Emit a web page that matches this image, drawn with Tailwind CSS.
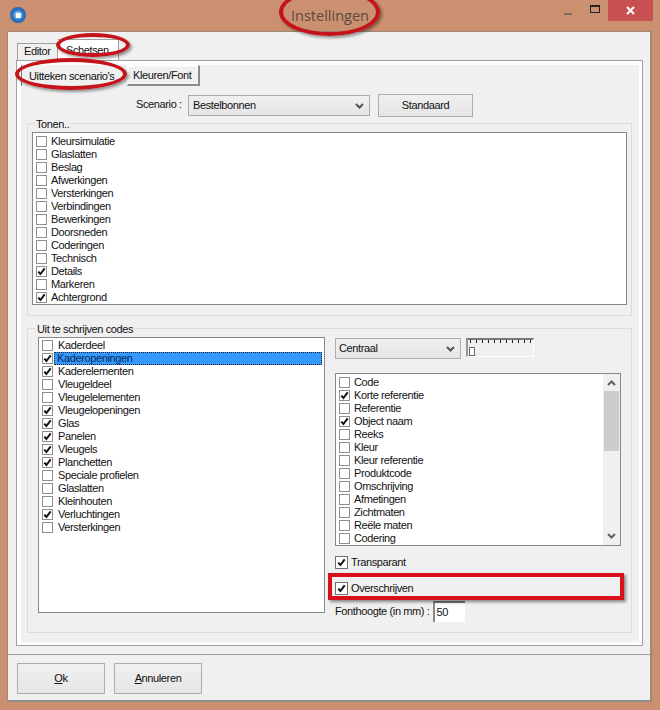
<!DOCTYPE html>
<html>
<head>
<meta charset="utf-8">
<script src="https://cdn.jsdelivr.net/npm/@tailwindcss/browser@4"></script>
</head>
<body class="m-0">
<svg width="0" height="0" class="absolute"><defs><symbol id="c" viewBox="0 0 11 11"><path d="M2.3 5.6 4.4 8 8.7 2.4" fill="none" stroke="#111" stroke-width="2"/></symbol></defs></svg>
<div class="relative w-[660px] h-[710px] overflow-hidden bg-[#cb9070] text-[11px] tracking-[-0.38px] whitespace-nowrap leading-[13px] text-[#111] font-['Liberation_Sans',sans-serif]">
  <!-- title bar -->
  <div class="h-[31px] flex items-start relative">
    <div class="ml-[10px] mt-[7px] w-[16px] h-[16px] rounded-full bg-[radial-gradient(circle,#ffffff_0%,#2a78c8_45%,#1c4f8c_100%)] flex items-center justify-center"><div class="w-[5px] h-[5px] bg-white/90"></div></div>
    <div class="ml-[265px] mt-[6px] text-[14.5px] tracking-normal leading-[20px] text-[#5a4a42] font-['Open_Sans',sans-serif]">Instellingen</div>
    <div class="ml-auto mr-[7px] flex items-start">
      <div class="w-[27px] h-[20px] flex items-center justify-center"><div class="w-[8px] h-[2px] mt-[8px] bg-[#7d6a5c]"></div></div>
      <div class="w-[27px] h-[20px] flex items-center justify-center"><div class="w-[10px] h-[8px] mt-[-2px] border border-t-2 border-[#222]"></div></div>
      <div class="w-[45px] h-[21px] bg-[#c75050] flex items-center justify-center">
        <svg width="9" height="9" viewBox="0 0 9 9"><path d="M1 1 8 8M8 1 1 8" stroke="#fff" stroke-width="2"/></svg>
      </div>
    </div>
  </div>
  <!-- client -->
  <div class="ml-[7px] w-[645px] h-[671px] bg-[#f0f0f0] border-t border-l border-r-2 border-[#a08878] border-b-2 border-b-[#8f8f8f] flex flex-col">
    <!-- tabs -->
    <div class="h-[28px] pl-[9px] flex items-end">
      <div class="w-[41px] h-[17px] bg-[#f0f0f0] border border-b-0 border-[#a0a0a0] pl-[6px] pt-[1px]">Editor</div>
      <div class="w-[61px] h-[21px] bg-white border-t border-r border-[#a0a0a0] pl-[8px] pt-[4px]">Schetsen</div>
    </div>
    <!-- tab pane -->
    <div class="ml-[8px] w-[627px] h-[586px] border border-[#a0a0a0] bg-white pl-[4px] pr-[3px] pt-[4px] pb-[3px]">
      <div class="h-full bg-[#f0f0f0] flex flex-col">
        <div class="h-[21px] flex items-start">
          <div class="w-[106px] h-[21px] bg-[#f0f0f0] border-l border-[#777] pl-[7px] pt-[5px]">Uitteken scenario's</div>
          <div class="w-[73px] h-[21px] bg-[#f0f0f0] border-t border-l border-white border-r-2 border-r-[#8a8a8a] border-b-2 border-b-[#8a8a8a] pl-[5px] pt-[3px] shadow-[inset_0_0_0_1px_#f8f8f8]">Kleuren/Font</div>
        </div>
        <!-- scenario row -->
        <div class="h-[23px] mt-[8px] flex items-center">
          <div class="ml-[115px] w-[52px] pb-[3px]">Scenario :</div>
          <div class="w-[182px] h-[21px] border border-[#acacac] bg-[linear-gradient(#f0f0f0,#e5e5e5)] flex items-center pl-[4px] pr-[5px]">
            <span>Bestelbonnen</span>
            <svg class="ml-auto" width="9" height="6" viewBox="0 0 9 6"><path d="M1 1 4.5 4.5 8 1" fill="none" stroke="#555" stroke-width="2"/></svg>
          </div>
          <div class="ml-[8px] w-[95px] h-[23px] border border-[#acacac] bg-[linear-gradient(#f0f0f0,#e5e5e5)] flex items-center justify-center">Standaard</div>
        </div>
        <!-- Tonen group -->
        <div class="relative ml-[6px] mt-[6px] w-[605px] h-[193px] border border-[#dcdcdc] pl-[4px] pr-[4px] pt-[8px]">
          <div class="absolute left-[7px] top-[-6px] bg-[#f0f0f0] px-[1px]">Tonen..</div>
          <div class="w-[595px] h-[173px] bg-white border border-[#828790] pl-[3px] pt-[2px]">
            <div class="flex items-center h-[13px]"><span class="w-[11px] h-[11px] border border-[#8f8f8f] mr-[4px] bg-white"></span>Kleursimulatie</div>
            <div class="flex items-center h-[13px]"><span class="w-[11px] h-[11px] border border-[#8f8f8f] mr-[4px] bg-white"></span>Glaslatten</div>
            <div class="flex items-center h-[13px]"><span class="w-[11px] h-[11px] border border-[#8f8f8f] mr-[4px] bg-white"></span>Beslag</div>
            <div class="flex items-center h-[13px]"><span class="w-[11px] h-[11px] border border-[#8f8f8f] mr-[4px] bg-white"></span>Afwerkingen</div>
            <div class="flex items-center h-[13px]"><span class="w-[11px] h-[11px] border border-[#8f8f8f] mr-[4px] bg-white"></span>Versterkingen</div>
            <div class="flex items-center h-[13px]"><span class="w-[11px] h-[11px] border border-[#8f8f8f] mr-[4px] bg-white"></span>Verbindingen</div>
            <div class="flex items-center h-[13px]"><span class="w-[11px] h-[11px] border border-[#8f8f8f] mr-[4px] bg-white"></span>Bewerkingen</div>
            <div class="flex items-center h-[13px]"><span class="w-[11px] h-[11px] border border-[#8f8f8f] mr-[4px] bg-white"></span>Doorsneden</div>
            <div class="flex items-center h-[13px]"><span class="w-[11px] h-[11px] border border-[#8f8f8f] mr-[4px] bg-white"></span>Coderingen</div>
            <div class="flex items-center h-[13px]"><span class="w-[11px] h-[11px] border border-[#8f8f8f] mr-[4px] bg-white"></span>Technisch</div>
            <div class="flex items-center h-[13px]"><span class="w-[11px] h-[11px] border border-[#8f8f8f] mr-[4px] bg-white"><svg class="-m-px w-[11px] h-[11px]"><use href="#c"/></svg></span>Details</div>
            <div class="flex items-center h-[13px]"><span class="w-[11px] h-[11px] border border-[#8f8f8f] mr-[4px] bg-white"></span>Markeren</div>
            <div class="flex items-center h-[13px]"><span class="w-[11px] h-[11px] border border-[#8f8f8f] mr-[4px] bg-white"><svg class="-m-px w-[11px] h-[11px]"><use href="#c"/></svg></span>Achtergrond</div>
          </div>
        </div>
        <!-- Uit te schrijven group -->
        <div class="relative ml-[6px] mt-[12px] w-[605px] h-[305px] border border-[#dcdcdc] flex pl-[10px] pt-[8px]">
          <div class="absolute left-[8px] top-[-6px] bg-[#f0f0f0] px-[1px]">Uit te schrijven codes</div>
          <div class="w-[287px] h-[276px] bg-white border border-[#828790] pl-[3px] pt-[1px]">
            <div class="flex items-center h-[13px]"><span class="w-[11px] h-[11px] border border-[#8f8f8f] mr-[5px] bg-white"></span>Kaderdeel</div>
            <div class="flex items-center h-[13px]"><span class="w-[11px] h-[11px] border border-[#8f8f8f] mr-[1px] bg-white"><svg class="-m-px w-[11px] h-[11px]"><use href="#c"/></svg></span><span class="w-[268px] h-[13px] bg-[#3399ff] outline-1 outline-dotted outline-offset-[-1px] outline-[#222] pl-[3px] text-[#0b2b55]">Kaderopeningen</span></div>
            <div class="flex items-center h-[13px]"><span class="w-[11px] h-[11px] border border-[#8f8f8f] mr-[5px] bg-white"><svg class="-m-px w-[11px] h-[11px]"><use href="#c"/></svg></span>Kaderelementen</div>
            <div class="flex items-center h-[13px]"><span class="w-[11px] h-[11px] border border-[#8f8f8f] mr-[5px] bg-white"></span>Vleugeldeel</div>
            <div class="flex items-center h-[13px]"><span class="w-[11px] h-[11px] border border-[#8f8f8f] mr-[5px] bg-white"></span>Vleugelelementen</div>
            <div class="flex items-center h-[13px]"><span class="w-[11px] h-[11px] border border-[#8f8f8f] mr-[5px] bg-white"><svg class="-m-px w-[11px] h-[11px]"><use href="#c"/></svg></span>Vleugelopeningen</div>
            <div class="flex items-center h-[13px]"><span class="w-[11px] h-[11px] border border-[#8f8f8f] mr-[5px] bg-white"><svg class="-m-px w-[11px] h-[11px]"><use href="#c"/></svg></span>Glas</div>
            <div class="flex items-center h-[13px]"><span class="w-[11px] h-[11px] border border-[#8f8f8f] mr-[5px] bg-white"><svg class="-m-px w-[11px] h-[11px]"><use href="#c"/></svg></span>Panelen</div>
            <div class="flex items-center h-[13px]"><span class="w-[11px] h-[11px] border border-[#8f8f8f] mr-[5px] bg-white"><svg class="-m-px w-[11px] h-[11px]"><use href="#c"/></svg></span>Vleugels</div>
            <div class="flex items-center h-[13px]"><span class="w-[11px] h-[11px] border border-[#8f8f8f] mr-[5px] bg-white"><svg class="-m-px w-[11px] h-[11px]"><use href="#c"/></svg></span>Planchetten</div>
            <div class="flex items-center h-[13px]"><span class="w-[11px] h-[11px] border border-[#8f8f8f] mr-[5px] bg-white"></span>Speciale profielen</div>
            <div class="flex items-center h-[13px]"><span class="w-[11px] h-[11px] border border-[#8f8f8f] mr-[5px] bg-white"></span>Glaslatten</div>
            <div class="flex items-center h-[13px]"><span class="w-[11px] h-[11px] border border-[#8f8f8f] mr-[5px] bg-white"></span>Kleinhouten</div>
            <div class="flex items-center h-[13px]"><span class="w-[11px] h-[11px] border border-[#8f8f8f] mr-[5px] bg-white"><svg class="-m-px w-[11px] h-[11px]"><use href="#c"/></svg></span>Verluchtingen</div>
            <div class="flex items-center h-[13px]"><span class="w-[11px] h-[11px] border border-[#8f8f8f] mr-[5px] bg-white"></span>Versterkingen</div>
          </div>
          <div class="ml-[10px] w-[286px] flex flex-col">
            <div class="flex items-start mt-[1px]">
              <div class="w-[126px] h-[21px] border border-[#acacac] bg-[linear-gradient(#f0f0f0,#e5e5e5)] flex items-center pl-[3px] pr-[5px]">
                <span>Centraal</span>
                <svg class="ml-auto" width="9" height="6" viewBox="0 0 9 6"><path d="M1 1 4.5 4.5 8 1" fill="none" stroke="#555" stroke-width="2"/></svg>
              </div>
              <div class="ml-[5px] w-[68px] h-[19px] border-t-2 border-l-2 border-t-[#777] border-l-[#999] border-r border-b border-r-white border-b-white bg-[repeating-linear-gradient(90deg,#222_0,#222_1px,transparent_1px,transparent_6px)] bg-no-repeat bg-[length:62px_3px] bg-[position:2px_0] relative">
                <div class="absolute left-[1px] top-[7px] w-[6px] h-[9px] border border-[#666] bg-white"></div>
              </div>
            </div>
            <div class="mt-[14px] w-[286px] h-[173px] bg-white border border-[#828790] pl-[3px] pt-[2px] relative">
              <div class="flex items-center h-[13px]"><span class="w-[11px] h-[11px] border border-[#8f8f8f] mr-[4px] bg-white"></span>Code</div>
              <div class="flex items-center h-[13px]"><span class="w-[11px] h-[11px] border border-[#8f8f8f] mr-[4px] bg-white"><svg class="-m-px w-[11px] h-[11px]"><use href="#c"/></svg></span>Korte referentie</div>
              <div class="flex items-center h-[13px]"><span class="w-[11px] h-[11px] border border-[#8f8f8f] mr-[4px] bg-white"></span>Referentie</div>
              <div class="flex items-center h-[13px]"><span class="w-[11px] h-[11px] border border-[#8f8f8f] mr-[4px] bg-white"><svg class="-m-px w-[11px] h-[11px]"><use href="#c"/></svg></span>Object naam</div>
              <div class="flex items-center h-[13px]"><span class="w-[11px] h-[11px] border border-[#8f8f8f] mr-[4px] bg-white"></span>Reeks</div>
              <div class="flex items-center h-[13px]"><span class="w-[11px] h-[11px] border border-[#8f8f8f] mr-[4px] bg-white"></span>Kleur</div>
              <div class="flex items-center h-[13px]"><span class="w-[11px] h-[11px] border border-[#8f8f8f] mr-[4px] bg-white"></span>Kleur referentie</div>
              <div class="flex items-center h-[13px]"><span class="w-[11px] h-[11px] border border-[#8f8f8f] mr-[4px] bg-white"></span>Produktcode</div>
              <div class="flex items-center h-[13px]"><span class="w-[11px] h-[11px] border border-[#8f8f8f] mr-[4px] bg-white"></span>Omschrijving</div>
              <div class="flex items-center h-[13px]"><span class="w-[11px] h-[11px] border border-[#8f8f8f] mr-[4px] bg-white"></span>Afmetingen</div>
              <div class="flex items-center h-[13px]"><span class="w-[11px] h-[11px] border border-[#8f8f8f] mr-[4px] bg-white"></span>Zichtmaten</div>
              <div class="flex items-center h-[13px]"><span class="w-[11px] h-[11px] border border-[#8f8f8f] mr-[4px] bg-white"></span>Reële maten</div>
              <div class="flex items-center h-[13px]"><span class="w-[11px] h-[11px] border border-[#8f8f8f] mr-[4px] bg-white"></span>Codering</div>
              <div class="absolute right-0 top-0 w-[17px] h-full bg-[#f0f0f0] flex flex-col items-center">
                <svg class="mt-[6px]" width="9" height="6" viewBox="0 0 9 6"><path d="M1 5 4.5 1.5 8 5" fill="none" stroke="#606060" stroke-width="2"/></svg>
                <div class="mt-[5px] w-[15px] h-[60px] bg-[#cdcdcd]"></div>
                <svg class="mt-auto mb-[6px]" width="9" height="6" viewBox="0 0 9 6"><path d="M1 1 4.5 4.5 8 1" fill="none" stroke="#606060" stroke-width="2"/></svg>
              </div>
            </div>
            <div class="mt-[10px] h-[13px] flex items-center"><span class="w-[13px] h-[13px] border border-[#707070] mr-[3px] bg-white"><svg class="w-[11px] h-[11px]"><use href="#c"/></svg></span>Transparant</div>
            <div class="mt-[13px] h-[13px] flex items-center"><span class="w-[13px] h-[13px] border border-[#707070] mr-[3px] bg-white"><svg class="w-[11px] h-[11px]"><use href="#c"/></svg></span>Overschrijven</div>
            <div class="mt-[6px] flex items-center"><span class="mr-[3px]">Fonthoogte (in mm) :</span><span class="w-[32px] h-[21px] border-t-2 border-l-2 border-t-[#777] border-l-[#888] bg-white pl-[2px] pt-[3px]">50</span></div>
          </div>
        </div>
      </div>
    </div>
    <!-- bottom bar -->
    <div class="mt-[8px] border-t border-[#a0a0a0] flex-1 flex items-start pl-[9px] pt-[8px] gap-[9px]">
      <div class="w-[88px] h-[31px] border border-[#acacac] bg-[linear-gradient(#f0f0f0,#e5e5e5)] flex items-center justify-center"><span class="underline">O</span>k</div>
      <div class="w-[88px] h-[31px] border border-[#acacac] bg-[linear-gradient(#f0f0f0,#e5e5e5)] flex items-center justify-center"><span class="underline">A</span>nnuleren</div>
    </div>
  </div>
  <!-- red annotations -->
  <div class="absolute left-[279px] top-[-12px] w-[101px] h-[48px] rounded-[50%] border-4 border-[#c5131c] shadow-[2px_2px_3px_rgba(0,0,0,0.4)]"></div>
  <div class="absolute left-[56px] top-[33px] w-[74px] h-[24px] rounded-[50%] border-4 border-[#c5131c] shadow-[2px_2px_3px_rgba(0,0,0,0.4)]"></div>
  <div class="absolute left-[15px] top-[58px] w-[112px] h-[32px] rounded-[50%] border-4 border-[#c5131c] shadow-[2px_2px_3px_rgba(0,0,0,0.4)]"></div>
  <div class="absolute left-[328px] top-[573px] w-[296px] h-[27px] border-4 border-[#d8101a] shadow-[2px_2px_3px_rgba(0,0,0,0.45)]"></div>
</div>
</body>
</html>
